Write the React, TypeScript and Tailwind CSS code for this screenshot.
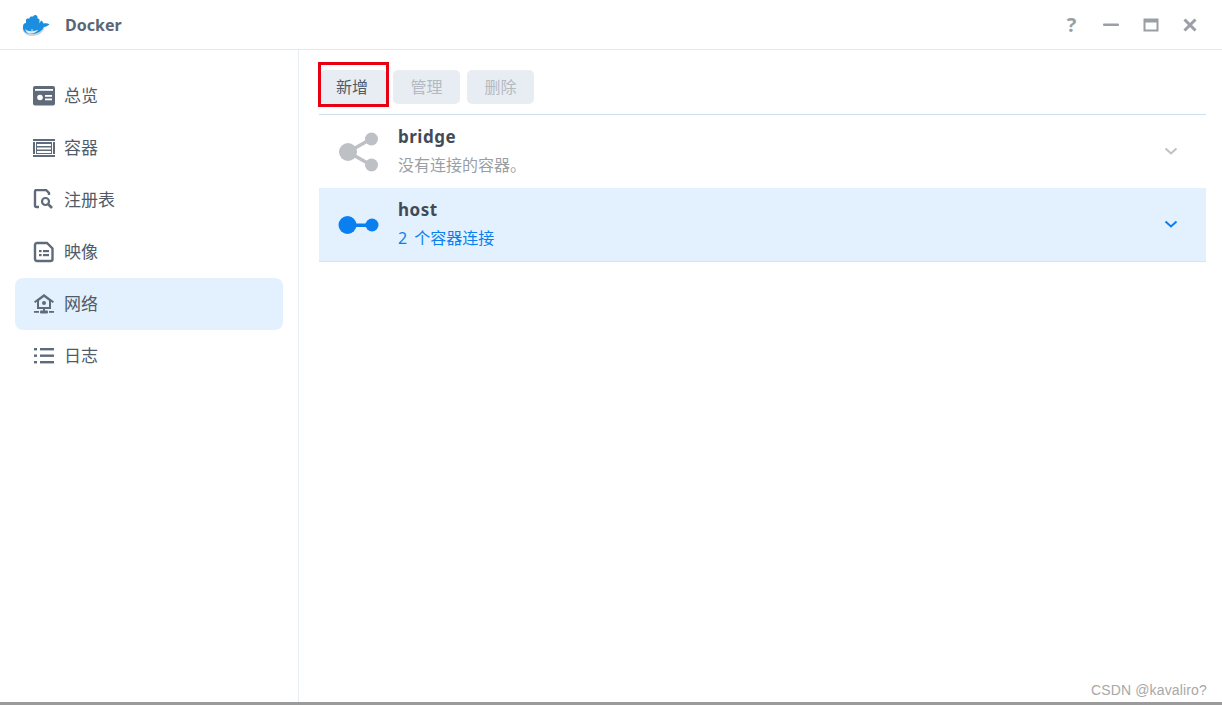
const cjk = "font-['Noto_Sans','Noto_Sans_CJK_SC',sans-serif]";

function OverviewIcon() {
  return (
    <svg width="22" height="20" viewBox="0 0 22 20">
      <rect x="0" y="0" width="22" height="19.500" rx="2" fill="#5f6b7a" />
      <rect x="2" y="3" width="18" height="1.800" fill="#fff" />
      <circle cx="7" cy="11.500" r="2.800" fill="#fff" />
      <rect x="12" y="9" width="7" height="1.800" fill="#fff" />
      <rect x="12" y="12.500" width="7" height="1.800" fill="#fff" />
    </svg>
  );
}

function ContainerIcon() {
  return (
    <svg width="22" height="20" viewBox="0 0 22 20">
      <rect x="0" y="1" width="22" height="18" fill="#5f6b7a" />
      <rect x="0" y="3" width="22" height="1" fill="#fff" />
      <rect x="0" y="16" width="22" height="1" fill="#fff" />
      <rect x="4" y="6" width="14" height="2" fill="#fff" />
      <rect x="4" y="9.500" width="14" height="2" fill="#fff" />
      <rect x="4" y="13" width="14" height="2" fill="#fff" />
      <rect x="2" y="4" width="1" height="12" fill="#fff" />
      <rect x="19" y="4" width="1" height="12" fill="#fff" />
    </svg>
  );
}

function RegistryIcon() {
  return (
    <svg width="22" height="22" viewBox="0 0 22 22" fill="none" stroke="#5f6b7a">
      <path d="M6 18H3.500a1.500 1.500 0 0 1-1.500-1.500V2.500A1.500 1.500 0 0 1 3.500 1H13l3 3v2" strokeWidth="2.400" />
      <circle cx="12.500" cy="12.500" r="3.500" strokeWidth="2.200" />
      <path d="M15.500 15.500L19 19" strokeWidth="2.600" />
    </svg>
  );
}

function ImageIcon() {
  return (
    <svg width="22" height="22" viewBox="0 0 22 22" fill="none" stroke="#5f6b7a">
      <path d="M4 2h10l5.500 5.500V18a2 2 0 0 1-2 2H4a2 2 0 0 1-2-2V4a2 2 0 0 1 2-2z" strokeWidth="2.400" />
      <g fill="#5f6b7a" stroke="none">
        <rect x="6" y="9" width="2.600" height="2.200" />
        <rect x="10" y="9" width="6" height="2.200" />
        <rect x="6" y="13" width="2.600" height="2.200" />
        <rect x="10" y="13" width="6" height="2.200" />
      </g>
    </svg>
  );
}

function NetworkIcon() {
  return (
    <svg width="22" height="22" viewBox="0 0 22 22" fill="#5f6b7a">
      <path d="M11 1L21 8.500l-1.200 1.500-1.800-1.300V16H4V8.700L2.200 10 1 8.500zM11 4L6 7.700V14h10V7.700z" fillRule="evenodd" />
      <circle cx="11" cy="10" r="2" />
      <rect x="10" y="15" width="2" height="3" />
      <rect x="7" y="17.500" width="8" height="3" rx="1" />
      <rect x="1" y="18" width="5" height="1.800" />
      <rect x="16" y="18" width="5" height="1.800" />
    </svg>
  );
}

function LogIcon() {
  return (
    <svg width="20" height="18" viewBox="0 0 20 18" fill="#5f6b7a">
      <rect x="0" y="1" width="3" height="2.400" />
      <rect x="6" y="1" width="14" height="2.400" />
      <rect x="0" y="7.500" width="3" height="2.400" />
      <rect x="6" y="7.500" width="14" height="2.400" />
      <rect x="0" y="14" width="3" height="2.400" />
      <rect x="6" y="14" width="14" height="2.400" />
    </svg>
  );
}

function DockerLogo() {
  return (
    <svg width="30" height="24" viewBox="0 0 30 24">
      <path d="M1.500 15c0 4.500 4 8 9.500 8 6 0 10.500-3 12.500-7.500l-10-2z" fill="#ccd2d6" />
      <path d="M2 13.500c-.5 4.500 3 7.500 8.500 7.500 6 0 10.500-3 12.500-7 2.200-.2 4.200-1.200 5.500-2.700-1.500-1.200-3.800-1.500-6-.8-.4-1.200-1.200-2.300-2.500-3l-1.500 3V7c0-1-1-1.500-2-1.500V4c0-1-1-2-2-2s-2 .5-2.500 1.500H10c-1 0-1.500 1-1.500 2H7c-1 0-2 .7-2 1.500v3c-1.500 0-3 1-3 3.500z" fill="#1c8ee0" />
      <path d="M4 16c3 2.800 9 2.800 13.500.5-2.500 3-5 4.200-8.500 4.200-2.200 0-4-1.700-5-4.700z" fill="#d8ecf9" />
      <circle cx="11" cy="17" r=".8" fill="#fff" />
    </svg>
  );
}

function Chevron({ color }: { color: string }) {
  return (
    <svg width="14" height="9" viewBox="0 0 14 9" fill="none" stroke={color} strokeWidth="2">
      <path d="M1.500 1.500L7 6.500l5.500-5" />
    </svg>
  );
}

const navItems = [
  { label: "总览", icon: <OverviewIcon /> },
  { label: "容器", icon: <ContainerIcon /> },
  { label: "注册表", icon: <RegistryIcon /> },
  { label: "映像", icon: <ImageIcon /> },
  { label: "网络", icon: <NetworkIcon />, active: true },
  { label: "日志", icon: <LogIcon /> },
];

export default function App() {
  return (
    <div className={`relative flex h-[705px] w-[1222px] flex-col overflow-hidden bg-white ${cjk}`}>
      {/* title bar */}
      <header className="flex h-[50px] shrink-0 items-center justify-between border-b border-[#e6e9ec] pl-[21px] pr-[24px]">
        <div className="flex items-center gap-[14px]">
          <DockerLogo />
          <span className="text-[16px] font-bold text-[#5a6675]">Docker</span>
        </div>
        <div className="flex items-center gap-[23.5px] text-[#9a9fa6]">
          <span className="w-[16px] text-center text-[20px] font-bold leading-none">?</span>
          <svg width="16" height="16" viewBox="0 0 16 16" fill="#9a9fa6">
            <rect x="0" y="6.500" width="16" height="2.500" rx="1" />
          </svg>
          <svg width="16" height="16" viewBox="0 0 16 16" fill="none" stroke="#9a9fa6">
            <rect x="1.500" y="2.500" width="13" height="11" strokeWidth="2" />
            <rect x="1" y="2" width="14" height="3.500" fill="#9a9fa6" strokeWidth="0" />
          </svg>
          <svg width="16" height="16" viewBox="0 0 16 16" fill="none" stroke="#9a9fa6" strokeWidth="3">
            <path d="M2.500 2.500l11 11M13.500 2.500l-11 11" />
          </svg>
        </div>
      </header>

      <div className="flex min-h-0 flex-1">
        {/* sidebar */}
        <nav className="flex w-[299px] shrink-0 flex-col border-r border-[#e6edf3] px-[15px] pt-[20px]">
          {navItems.map((item) => (
            <div
              key={item.label}
              className={`flex h-[52px] w-[268px] items-center rounded-[8px] pl-[18px] ${item.active ? "bg-[#e3f0fd]" : ""}`}
            >
              <div className="flex w-[22px] justify-center">{item.icon}</div>
              <span className="ml-[9px] text-[17px] text-[#4f5b68]">{item.label}</span>
            </div>
          ))}
        </nav>

        {/* main */}
        <main className="flex min-w-0 flex-1 flex-col pl-[20px] pr-[16px] pt-[20px]">
          <div className="flex h-[45px] shrink-0 gap-[6px] border-b border-[#cfe0ec]">
            <button className="relative ml-[1px] h-[34px] w-[67px] rounded-[5px] bg-[#e8edf3] pr-[3px] text-[16px] text-[#4f5b68]">
              新增
              <span className="absolute left-[-2px] top-[-8px] h-[45px] w-[71px] border-[3px] border-[#e60012]" />
            </button>
            <button className="h-[34px] w-[67px] rounded-[5px] bg-[#e8edf3] text-[16px] text-[#b4bac2]">管理</button>
            <button className="ml-[1px] h-[34px] w-[67px] rounded-[5px] bg-[#e8edf3] text-[16px] text-[#b4bac2]">删除</button>
          </div>

          <div className="flex h-[73px] shrink-0 items-center pl-[19px] pr-[28px]">
            <svg width="41" height="40" viewBox="0 0 41 40">
              <path d="M10 20L33 7M10 20L33 33" stroke="#bdc0c5" strokeWidth="3.500" fill="none" />
              <circle cx="10" cy="20" r="9" fill="#bdc0c5" />
              <circle cx="33.500" cy="7" r="6.500" fill="#bdc0c5" />
              <circle cx="33.500" cy="33" r="6.500" fill="#bdc0c5" />
            </svg>
            <div className="ml-[19px] flex-1 pb-[2px]">
              <div className="text-[17px] font-bold leading-[24px] tracking-[0.5px] text-[#414b57]">bridge</div>
              <div className="mt-[5px] text-[16px] leading-[22px] text-[#9a9fa6]">没有连接的容器。</div>
            </div>
            <Chevron color="#bcc1c6" />
          </div>

          <div className="flex h-[74px] shrink-0 items-center border-b border-[#d5e4f0] bg-[#e3f0fd] pl-[19px] pr-[28px]">
            <svg width="41" height="20" viewBox="0 0 41 20">
              <rect x="10" y="8.500" width="24" height="3.500" fill="#0a7ff0" />
              <circle cx="9.500" cy="10" r="9" fill="#0a7ff0" />
              <circle cx="34" cy="10" r="6.500" fill="#0a7ff0" />
            </svg>
            <div className="ml-[19px] flex-1 pb-[2px]">
              <div className="text-[17px] font-bold leading-[24px] tracking-[0.5px] text-[#414b57]">host</div>
              <div className="mt-[5px] text-[16px] leading-[22px] text-[#0a7ff0] [word-spacing:3px]">2 个容器连接</div>
            </div>
            <Chevron color="#0a7ff0" />
          </div>
        </main>
      </div>

      <div className="h-[3px] shrink-0 bg-[#9b9b9b]" />
      <span className="absolute bottom-[7px] right-[15px] font-['Liberation_Sans',sans-serif] text-[14px] leading-[15px] tracking-[0.15px] text-[#a8a8a8]">
        CSDN @kavaliro?
      </span>
    </div>
  );
}
